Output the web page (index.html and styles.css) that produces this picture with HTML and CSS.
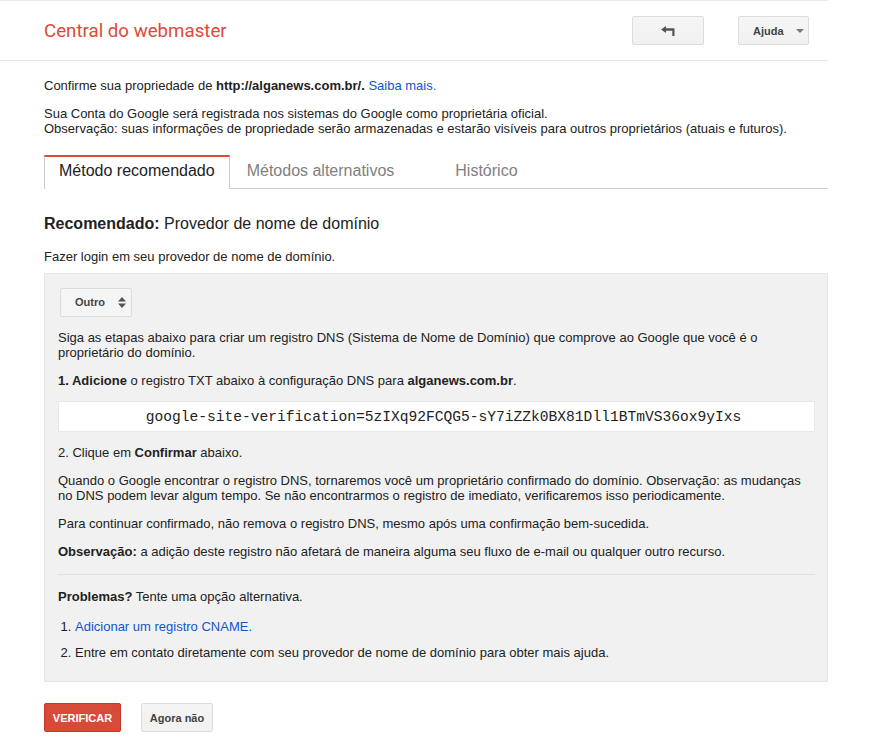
FILE: index.html
```html
<!DOCTYPE html>
<html lang="pt-BR">
<head>
<meta charset="utf-8">
<title>Central do webmaster</title>
<link rel="stylesheet" href="styles.css">
</head>
<body>
<header class="header">
  <div class="title">Central do webmaster</div>
  <div class="header-actions">
    <button class="btn btn-back" aria-label="Voltar">
      <svg width="14" height="10" viewBox="0 0 14 10"><path d="M0 3.5 L5 0 L5 2.3 L13.5 2.3 L13.5 10 L11.3 10 L11.3 4.7 L5 4.7 L5 7 Z" fill="#555"/></svg>
    </button>
    <button class="btn btn-help">Ajuda <span class="caret"></span></button>
  </div>
</header>

<main class="main">
  <p class="intro">Confirme sua propriedade de <b>http://alganews.com.br/.</b> <a href="#">Saiba mais.</a></p>
  <p class="intro2">Sua Conta do Google será registrada nos sistemas do Google como proprietária oficial.<br>Observação: suas informações de propriedade serão armazenadas e estarão visíveis para outros proprietários (atuais e futuros).</p>

  <nav class="tabs">
    <div class="tab active">Método recomendado</div>
    <div class="tab">Métodos alternativos</div>
    <div class="tab tab-last">Histórico</div>
  </nav>

  <h2 class="heading"><b>Recomendado:</b> Provedor de nome de domínio</h2>
  <p class="login">Fazer login em seu provedor de nome de domínio.</p>

  <section class="box">
    <div class="select">Outro
      <svg class="updown" width="8" height="11" viewBox="0 0 8 11"><path d="M0 4.5 L4 0 L8 4.5 Z M0 6.5 L8 6.5 L4 11 Z" fill="#555"/></svg>
    </div>
    <p>Siga as etapas abaixo para criar um registro DNS (Sistema de Nome de Domínio) que comprove ao Google que você é o proprietário do domínio.</p>
    <p><b>1. Adicione</b> o registro TXT abaixo à configuração DNS para <b>alganews.com.br</b>.</p>
    <div class="code">google-site-verification=5zIXq92FCQG5-sY7iZZk0BX81Dll1BTmVS36ox9yIxs</div>
    <p>2. Clique em <b>Confirmar</b> abaixo.</p>
    <p>Quando o Google encontrar o registro DNS, tornaremos você um proprietário confirmado do domínio. Observação: as mudanças no DNS podem levar algum tempo. Se não encontrarmos o registro de imediato, verificaremos isso periodicamente.</p>
    <p>Para continuar confirmado, não remova o registro DNS, mesmo após uma confirmação bem-sucedida.</p>
    <p><b>Observação:</b> a adição deste registro não afetará de maneira alguma seu fluxo de e-mail ou qualquer outro recurso.</p>
    <hr class="sep">
    <p class="problems"><b>Problemas?</b> Tente uma opção alternativa.</p>
    <ol class="alts">
      <li><a href="#">Adicionar um registro CNAME.</a></li>
      <li>Entre em contato diretamente com seu provedor de nome de domínio para obter mais ajuda.</li>
    </ol>
  </section>

  <div class="actions">
    <button class="btn-primary">VERIFICAR</button>
    <button class="btn btn-secondary">Agora não</button>
  </div>
</main>
</body>
</html>
```
FILE: styles.css
```css
html, body {
  margin: 0;
  padding: 0;
  background: #fff;
}
body {
  font-family: "Liberation Sans", Arial, sans-serif;
  font-size: 13px;
  line-height: 15px;
  color: #222;
}
a {
  color: #15c;
  text-decoration: none;
}
p {
  margin: 13px 0 0;
}

.header {
  box-sizing: border-box;
  width: 828px;
  height: 61px;
  border-top: 1px solid #ebebeb;
  border-bottom: 1px solid #e5e5e5;
  display: flex;
  align-items: center;
  justify-content: space-between;
  padding: 0 19px 0 44px;
}
.title {
  font-family: Roboto, "Liberation Sans", sans-serif;
  font-size: 18.7px;
  color: #dd4b39;
  line-height: 24px;
}
.header-actions {
  display: flex;
  gap: 34px;
  align-items: center;
}
.btn {
  box-sizing: border-box;
  height: 29px;
  border: 1px solid #dcdcdc;
  border-radius: 2px;
  background: linear-gradient(#f5f5f5, #f1f1f1);
  font-family: "Liberation Sans", Arial, sans-serif;
  font-weight: bold;
  font-size: 11px;
  color: #444;
  padding: 0;
  display: flex;
  align-items: center;
  justify-content: center;
}
.btn-back {
  width: 72px;
}
.btn-help {
  width: 71px;
  justify-content: flex-start;
  padding-left: 14px;
}
.caret {
  display: inline-block;
  width: 0;
  height: 0;
  border-left: 4px solid transparent;
  border-right: 4px solid transparent;
  border-top: 4px solid #777;
  margin-left: 12px;
  margin-top: 1px;
}

.main {
  width: 784px;
  padding-left: 44px;
}
.intro {
  margin-top: 17px;
}
.tabs {
  display: flex;
  margin-top: 19px;
  border-bottom: 1px solid #ccc;
  height: 33px;
}
.tab {
  box-sizing: border-box;
  height: 33px;
  font-size: 16px;
  line-height: 19px;
  padding: 6px 17px 0;
  color: #808080;
}
.tab.active {
  height: 34px;
  padding: 4px 14px 0;
  border: 1px solid #ccc;
  border-top: 2px solid #dd4b39;
  border-bottom: none;
  background: #fff;
  color: #222;
}
.tab-last {
  padding-left: 44px;
}

.heading {
  margin: 25px 0 0;
  font-size: 16px;
  line-height: 19px;
  font-weight: normal;
  color: #222;
}
.login {
  margin-top: 16px;
}

.box {
  box-sizing: border-box;
  margin-top: 9px;
  width: 784px;
  background: #f1f1f1;
  border: 1px solid #e5e5e5;
  padding: 14px 12px 21px 13px;
}
.select {
  box-sizing: border-box;
  margin-left: 2px;
  width: 72px;
  height: 29px;
  border: 1px solid #dcdcdc;
  border-radius: 2px;
  background: #f5f5f5;
  font-size: 11px;
  font-weight: bold;
  color: #444;
  display: flex;
  align-items: center;
  padding-left: 14px;
}
.updown {
  margin-left: 13px;
}
.code {
  margin-top: 13px;
  box-sizing: border-box;
  height: 31px;
  background: #fff;
  border: 1px solid #e8e8e8;
  font-family: "Liberation Mono", "Courier New", monospace;
  font-size: 14.6px;
  line-height: 31px;
  text-align: center;
  padding-left: 14px;
  color: #222;
}
.sep {
  margin: 15px 0 0;
  border: 0;
  border-top: 1px solid #e0e0e0;
  height: 0;
}
.problems {
  margin-top: 14px;
}
.alts {
  margin: 0;
  padding-left: 17px;
}
.alts li {
  margin-top: 15px;
}
.alts li + li {
  margin-top: 11px;
}

.actions {
  display: flex;
  gap: 20px;
  margin-top: 21px;
}
.btn-primary {
  box-sizing: border-box;
  width: 77px;
  height: 29px;
  border: 1px solid #c53727;
  border-radius: 2px;
  background: #d84a38;
  color: #fff;
  font-family: "Liberation Sans", Arial, sans-serif;
  font-weight: bold;
  font-size: 11px;
  padding: 0;
}
.btn-secondary {
  width: 72px;
}
```
